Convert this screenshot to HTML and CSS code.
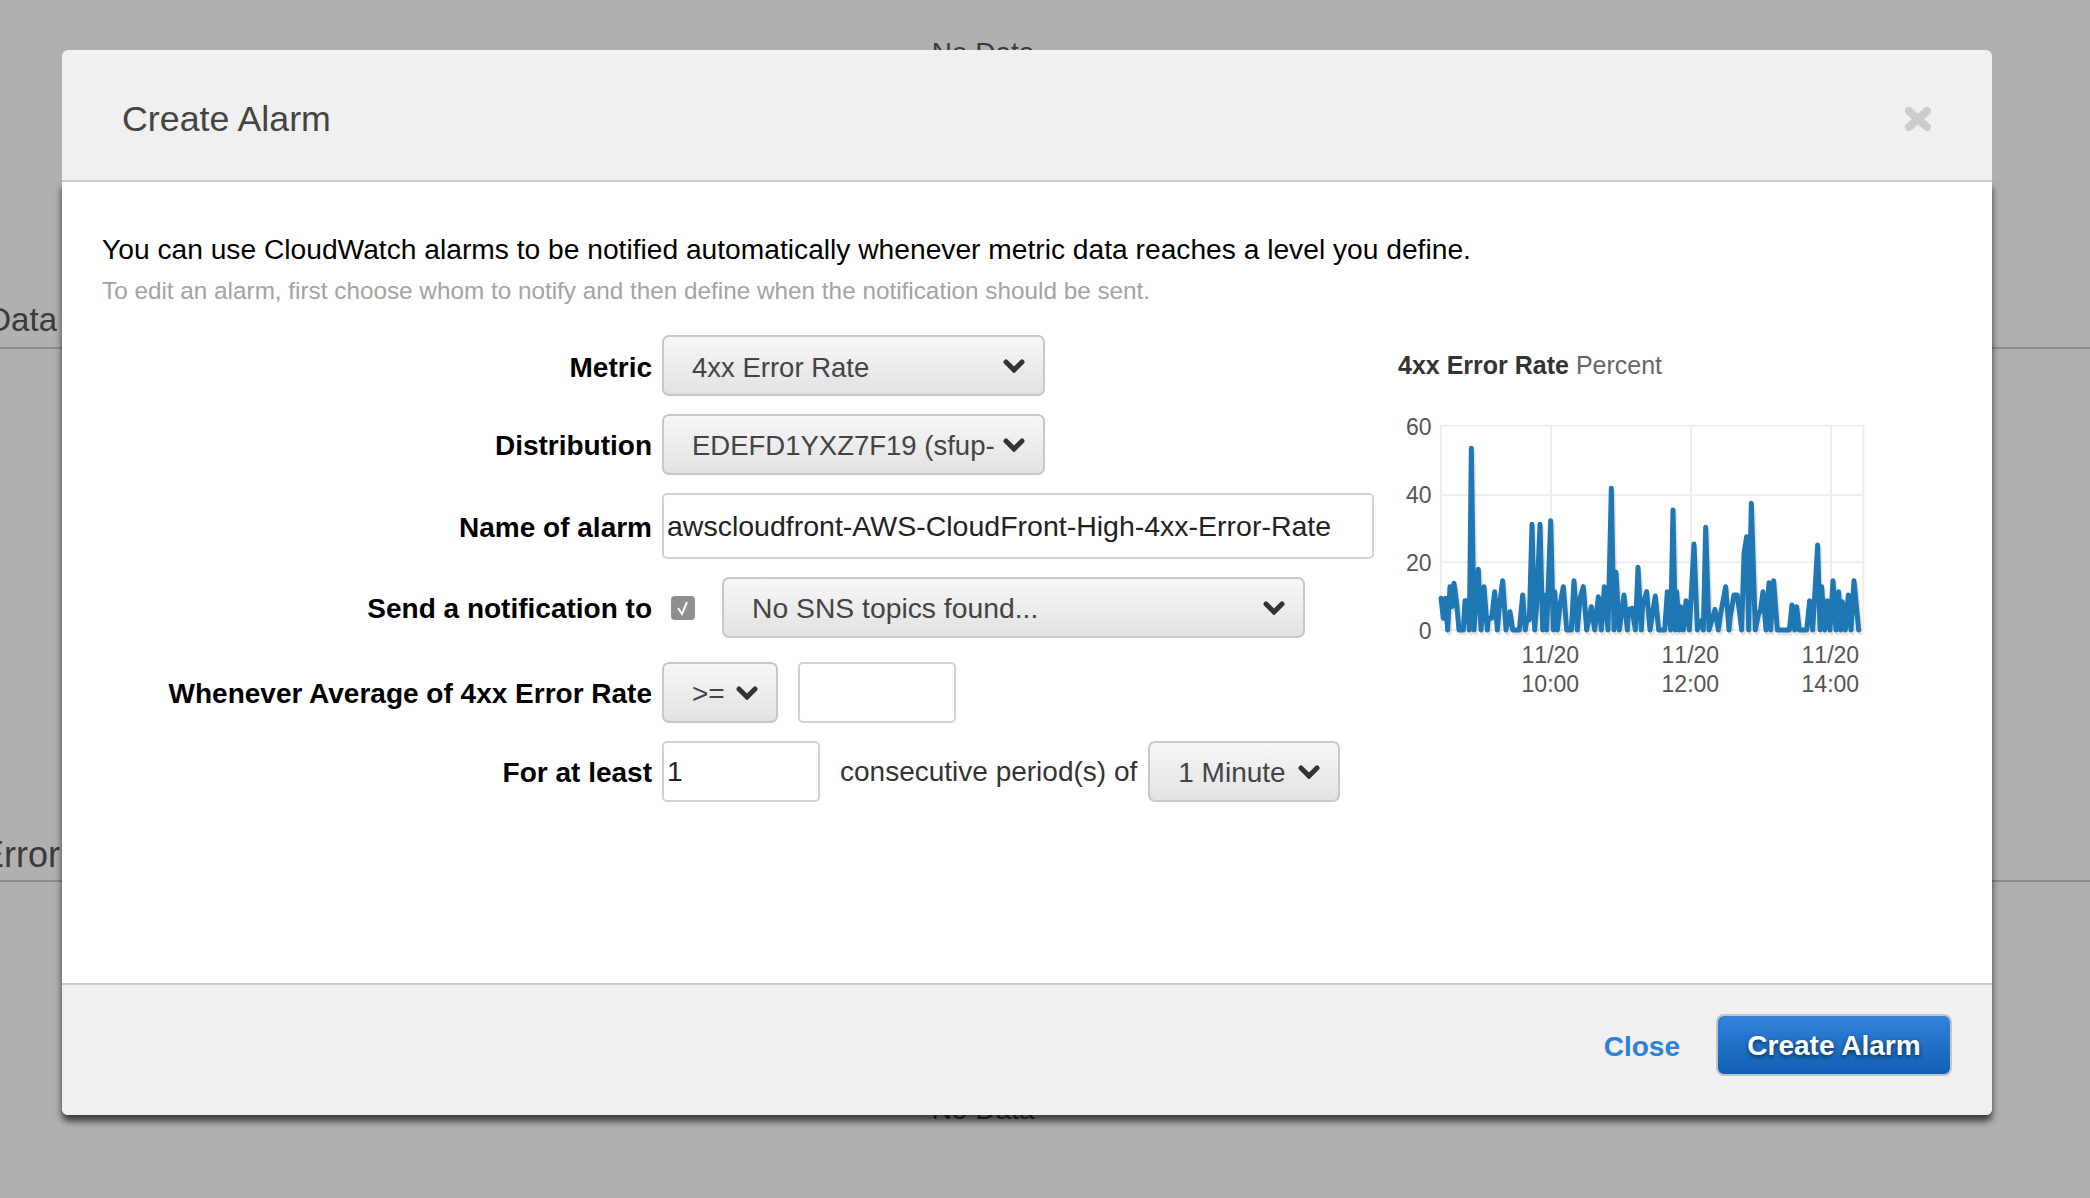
FILE: index.html
```html
<!DOCTYPE html>
<html lang="en">
<head>
  <meta charset="UTF-8"/>
  <title>Create Alarm</title>
  <link rel="stylesheet" href="styles.css">
</head>
<body>
  <div class="dash">
    <section class="panel panel-first">
      <p class="no-data">No Data</p>
      <div class="panel-title">Data</div>
    </section>
    <section class="panel panel-second">
      <div class="panel-title">Error</div>
    </section>
    <p class="no-data no-data-last">No Data</p>
  </div>

  <div class="modal">
    <header class="modal-head">
      <h1>Create Alarm</h1>
      <svg class="close-x" viewBox="0 0 26 24"><path d="M4 4 22 20M22 4 4 20"/></svg>
    </header>

    <div class="modal-panel">
      <main class="modal-body">
        <p class="intro">You can use CloudWatch alarms to be notified automatically whenever metric data reaches a level you define.</p>
        <p class="hint">To edit an alarm, first choose whom to notify and then define when the notification should be sent.</p>

        <div class="columns">
          <div class="form">
            <div class="row row-first">
              <label>Metric</label>
              <div class="select w-metric"><span>4xx Error Rate</span><svg viewBox="0 0 22 14"><path d="M3 3l8 8 8-8"/></svg></div>
            </div>
            <div class="row">
              <label>Distribution</label>
              <div class="select w-metric"><span>EDEFD1YXZ7F19 (sfup-</span><svg viewBox="0 0 22 14"><path d="M3 3l8 8 8-8"/></svg></div>
            </div>
            <div class="row">
              <label>Name of alarm</label>
              <div class="input w-name">awscloudfront-AWS-CloudFront-High-4xx-Error-Rate</div>
            </div>
            <div class="row">
              <label>Send a notification to</label>
              <span class="check"><svg viewBox="0 0 24 24"><path d="M7 12l4 6 5-12"/></svg></span>
              <div class="select w-topic"><span>No SNS topics found...</span><svg viewBox="0 0 22 14"><path d="M3 3l8 8 8-8"/></svg></div>
            </div>
            <div class="row row-spaced">
              <label>Whenever Average of 4xx Error Rate</label>
              <div class="select w-op"><span>&gt;=</span><svg viewBox="0 0 22 14"><path d="M3 3l8 8 8-8"/></svg></div>
              <div class="input w-num gap-left"></div>
            </div>
            <div class="row">
              <label>For at least</label>
              <div class="input w-num">1</div>
              <span class="inline-text">consecutive period(s) of</span>
              <div class="select w-period"><span>1 Minute</span><svg viewBox="0 0 22 14"><path d="M3 3l8 8 8-8"/></svg></div>
            </div>
          </div>

          <div class="chart">
            <div class="chart-title"><b>4xx Error Rate</b> Percent</div>
            <svg class="plot" viewBox="0 180 1530 930">
              <g class="grid">
                <path d="M183 257H1450V870H183Z"/>
                <path d="M513 257V870M933 257V870M1353 257V870M183 465H1450M183 667H1450"/>
              </g>
              <g class="ticks">
                <text x="155" y="284" text-anchor="end">60</text>
                <text x="155" y="490" text-anchor="end">40</text>
                <text x="155" y="692" text-anchor="end">20</text>
                <text x="155" y="898" text-anchor="end">0</text>
                <text x="511" y="968" text-anchor="middle">11/20</text>
                <text x="511" y="1055" text-anchor="middle">10:00</text>
                <text x="931" y="968" text-anchor="middle">11/20</text>
                <text x="931" y="1055" text-anchor="middle">12:00</text>
                <text x="1351" y="968" text-anchor="middle">11/20</text>
                <text x="1351" y="1055" text-anchor="middle">14:00</text>
              </g>
              <defs>
                <polyline id="series" points="183,775 190,835 197,775 203,870 210,740 216,800 222,730 230,790 237,870 250,870 255,782 262,782 268,870 274,325 282,870 295,688 303,870 312,740 322,870 325,835 335,835 344,755 352,870 358,800 368,722 378,870 390,815 398,870 418,870 428,765 436,870 440,840 448,840 456,553 464,870 470,795 480,553 488,870 492,765 500,870 512,542 520,870 524,755 532,870 540,795 550,740 560,870 574,870 582,722 592,870 600,775 610,740 620,870 634,800 644,870 655,770 664,870 673,740 684,870 694,445 702,870 708,697 718,870 732,765 742,870 746,808 756,805 766,870 774,682 784,870 788,795 800,755 810,870 826,768 836,870 854,870 862,755 872,870 879,510 886,870 890,755 898,870 902,800 910,870 918,782 928,870 942,612 952,870 966,840 970,870 977,562 987,870 1005,808 1015,870 1022,820 1037,740 1047,870 1050,835 1062,765 1072,765 1085,870 1092,640 1100,590 1106,870 1114,490 1126,870 1135,825 1142,808 1149,755 1158,870 1167,728 1172,870 1181,722 1192,870 1228,870 1236,795 1244,870 1250,800 1258,870 1280,870 1289,782 1298,870 1313,615 1320,870 1325,740 1334,870 1342,782 1350,870 1359,722 1368,870 1376,755 1382,870 1387,785 1396,870 1405,765 1413,870 1422,722 1436,870"/>
              </defs>
              <use href="#series" class="series-shadow" x="5" y="9"/>
              <use href="#series" class="series-line"/>
            </svg>
          </div>
        </div>
      </main>

      <footer class="modal-foot">
        <a class="link-close">Close</a>
        <button class="btn-primary">Create Alarm</button>
      </footer>
    </div>
  </div>
</body>
</html>
```

FILE: styles.css
```css
* { box-sizing: border-box; }
html, body { height: 100%; }
body {
  margin: 0; overflow: hidden; background: #b0b0b0; color: #000;
  font-family: "Liberation Sans", Arial, sans-serif; font-size: 28px;
}

/* dimmed dashboard behind the modal */
.dash { color: #3a3a3a; }
.panel {
  display: flex; flex-direction: column; justify-content: flex-end;
  border-bottom: 2px solid #8c8c8c;
}
.panel-first { height: 349px; }
.panel-second { height: 533px; }
.panel-title {
  display: flex; justify-content: flex-end; width: 57px; padding-bottom: 9px;
  overflow: hidden; white-space: nowrap; line-height: 36px; font-size: 33px;
}
.panel-second .panel-title { width: 60px; padding-bottom: 7px; font-size: 36px; }
.no-data {
  margin: 37px 0 auto; text-align: center; width: 1966px; line-height: 32px;
}
.no-data-last { margin-top: 212px; }

/* modal */
.modal {
  position: absolute; left: 62px; top: 50px; width: 1930px; height: 1065px;
  display: flex; flex-direction: column;
}
.modal-head {
  height: 132px; flex: none; display: flex; align-items: center; justify-content: space-between;
  padding: 8px 61px 0 60px; background: #f0f0f0; border-bottom: 2px solid #ccc;
  border-radius: 6px 6px 0 0;
}
.modal-head h1 { margin: 0; font-size: 35.8px; font-weight: 400; color: #444; }
.close-x { width: 26px; height: 24px; }
.close-x path { fill: none; stroke: #ccc; stroke-width: 8; stroke-linecap: round; }

.modal-panel {
  flex: 1; display: flex; flex-direction: column; background: #fff;
  border-radius: 0 0 6px 6px; box-shadow: 0 6px 7px rgba(0, 0, 0, .68);
}
.modal-body { flex: 1; padding: 51px 40px 0; }
.intro { margin: 0; line-height: 32px; font-size: 28.2px; }
.hint { margin: 12px 0 0; font-size: 24.3px; line-height: 28px; color: #a3a3a3; }

.columns { display: flex; margin-top: 30px; }
.form { width: 1278px; flex: none; display: flex; flex-direction: column; gap: 18px; }
.row { display: flex; align-items: center; }
.row label {
  width: 550px; margin-right: 10px; padding-top: 3px; flex: none;
  text-align: right; font-weight: 700;
}
.row-first label, .row-first .select span { padding-top: 4px; }
.row-spaced { margin-top: 6px; }

.select {
  display: flex; align-items: center; justify-content: space-between; height: 61px;
  padding: 0 18px 0 28px; border: 2px solid #c8c8c8; border-radius: 7px;
  background: linear-gradient(#f7f7f7, #e2e2e2); color: #444; overflow: hidden;
}
.select span { padding-top: 2px; white-space: nowrap; overflow: hidden; }
.select svg { width: 22px; height: 14px; flex: none; }
.select svg path { fill: none; stroke: #333; stroke-width: 5; stroke-linecap: round; }
.w-metric { width: 383px; font-size: 27.5px; }
.w-topic { width: 583px; margin-left: 27px; font-size: 28.3px; }
.w-op { width: 116px; }
.w-period { width: 192px; }

.input {
  display: flex; align-items: center; height: 61px; padding: 0 3px;
  border: 2px solid #d2d2d2; border-radius: 5px; background: #fff; color: #222;
  white-space: nowrap;
}
.w-name { width: 712px; height: 66px; font-size: 28.5px; }
.w-num { width: 158px; }
.gap-left { margin-left: 20px; }
.inline-text { margin: 0 11px 0 20px; color: #333; }

.check {
  width: 24px; height: 24px; margin-left: 9px; border-radius: 4px; background: #8e8e93; flex: none;
}
.check svg { display: block; }
.check path { fill: none; stroke: #fff; stroke-width: 2; }

.chart { flex: none; }
.chart-title {
  margin: 15px 0 20px 18px; font-size: 25px; line-height: 30px; color: #666;
}
.chart-title b { color: #333; }
.plot { display: block; width: 510px; height: 310px; }
.grid path { fill: none; stroke: #eee; stroke-width: 6; }
.ticks text { font-size: 69px; fill: #555; font-kerning: none; }
.series-line, .series-shadow { fill: none; stroke-linejoin: round; stroke-linecap: round; stroke-width: 15; }
.series-line { stroke: #1f77b4; }
.series-shadow { stroke: #000; opacity: .1; }

.modal-foot {
  flex: none; height: 132px; display: flex; align-items: flex-start; justify-content: flex-end; gap: 36px;
  padding: 29px 40px 0 0; background: #f0f0f0; border-top: 2px solid #ccc;
  border-radius: 0 0 6px 6px;
}
.link-close { color: #2f80d8; font-weight: 700; line-height: 62px; margin-top: 2px; }
.btn-primary {
  width: 236px; height: 62px; padding: 2px 0 0; border: 2px solid #c4c4c4; border-radius: 8px;
  background: linear-gradient(#3283dc, #105fb3); color: #fff;
  font: 700 28px "Liberation Sans", Arial, sans-serif; text-shadow: 0 2px 4px rgba(0, 0, 0, .6);
}
```
